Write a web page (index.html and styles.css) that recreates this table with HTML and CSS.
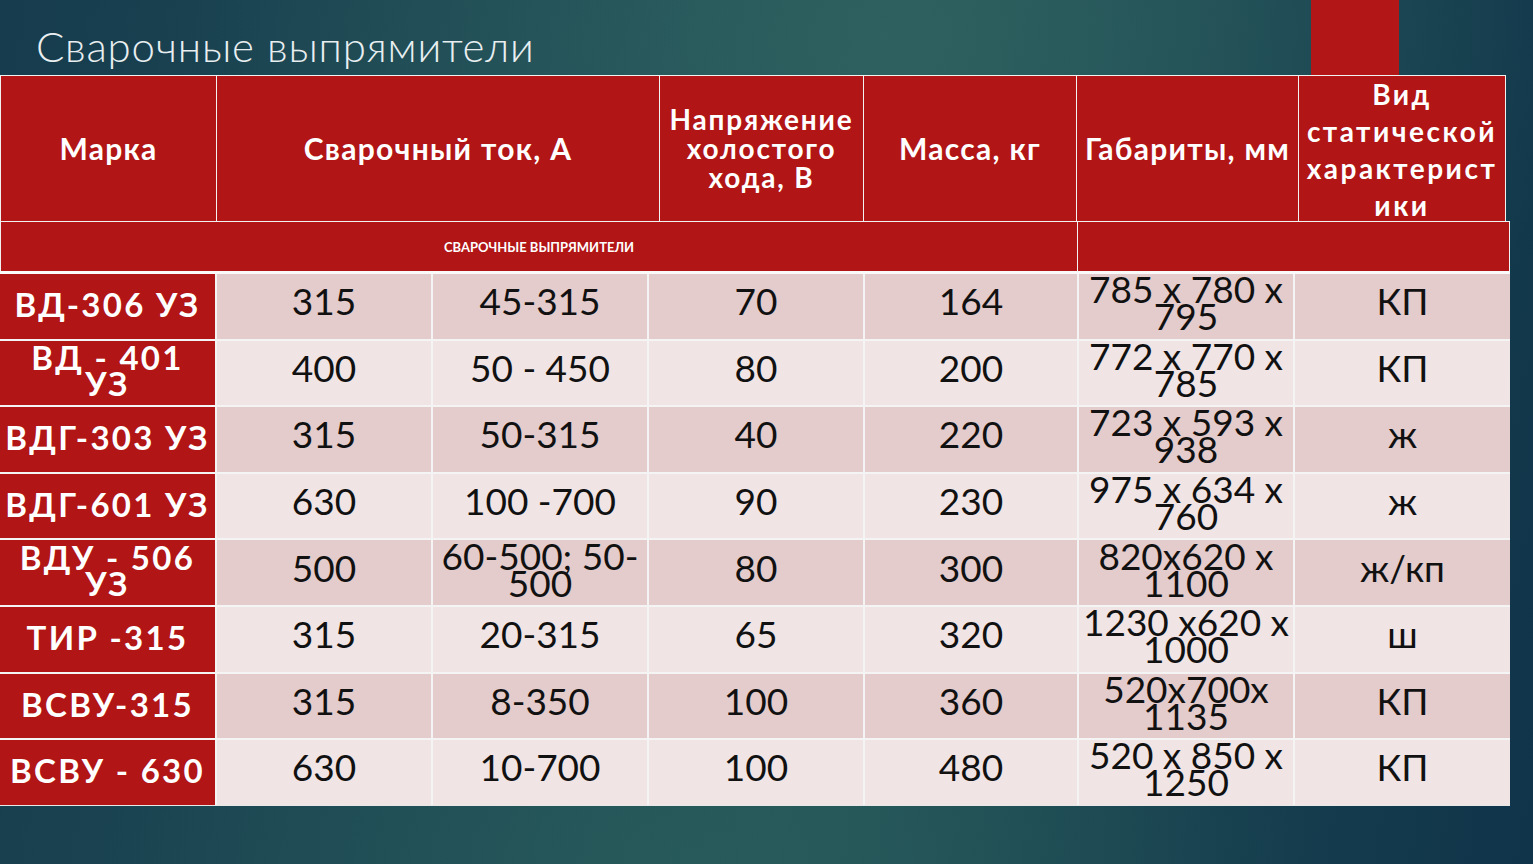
FILE: index.html
```html
<!DOCTYPE html>
<html lang="ru">
<head>
<meta charset="utf-8">
<title>Сварочные выпрямители</title>
<link rel="stylesheet" href="styles.css">
</head>
<body>
<div class="slide">
  <div class="top">
    <h1 class="title">Сварочные выпрямители</h1>
    <div class="accent"></div>
  </div>
  <div class="table">
    <div class="head1">
      <div class="hcell">Марка</div>
      <div class="hcell">Сварочный ток, А</div>
      <div class="hcell hsmall">Напряжение холостого хода, В</div>
      <div class="hcell">Масса, кг</div>
      <div class="hcell">Габариты, мм</div>
      <div class="hcell hvid">Вид статической характерист<wbr>ики</div>
    </div>
    <div class="head2">
      <div class="h2cell">СВАРОЧНЫЕ ВЫПРЯМИТЕЛИ</div>
      <div class="h2cell"></div>
    </div>
    <div class="body">
      <div class="cell mark odd">ВД-306 УЗ</div>
      <div class="cell odd">315</div>
      <div class="cell odd">45-315</div>
      <div class="cell odd">70</div>
      <div class="cell odd">164</div>
      <div class="cell odd two">785 x 780 x<br>795</div>
      <div class="cell odd">КП</div>

      <div class="cell mark two">ВД - 401<br>УЗ</div>
      <div class="cell even">400</div>
      <div class="cell even">50 - 450</div>
      <div class="cell even">80</div>
      <div class="cell even">200</div>
      <div class="cell even two">772 x 770 x<br>785</div>
      <div class="cell even">КП</div>

      <div class="cell mark">ВДГ-303 УЗ</div>
      <div class="cell odd">315</div>
      <div class="cell odd">50-315</div>
      <div class="cell odd">40</div>
      <div class="cell odd">220</div>
      <div class="cell odd two">723 x 593 x<br>938</div>
      <div class="cell odd">ж</div>

      <div class="cell mark">ВДГ-601 УЗ</div>
      <div class="cell even">630</div>
      <div class="cell even">100 -700</div>
      <div class="cell even">90</div>
      <div class="cell even">230</div>
      <div class="cell even two">975 x 634 x<br>760</div>
      <div class="cell even">ж</div>

      <div class="cell mark two">ВДУ - 506<br>УЗ</div>
      <div class="cell odd">500</div>
      <div class="cell odd two">60-500; 50-<br>500</div>
      <div class="cell odd">80</div>
      <div class="cell odd">300</div>
      <div class="cell odd two">820x620 x<br>1100</div>
      <div class="cell odd">ж/кп</div>

      <div class="cell mark">ТИР -315</div>
      <div class="cell even">315</div>
      <div class="cell even">20-315</div>
      <div class="cell even">65</div>
      <div class="cell even">320</div>
      <div class="cell even two">1230 x620 x<br>1000</div>
      <div class="cell even">ш</div>

      <div class="cell mark">ВСВУ-315</div>
      <div class="cell odd">315</div>
      <div class="cell odd">8-350</div>
      <div class="cell odd">100</div>
      <div class="cell odd">360</div>
      <div class="cell odd two">520x700x<br>1135</div>
      <div class="cell odd">КП</div>

      <div class="cell mark">ВСВУ - 630</div>
      <div class="cell even">630</div>
      <div class="cell even">10-700</div>
      <div class="cell even">100</div>
      <div class="cell even">480</div>
      <div class="cell even two">520 x 850 x<br>1250</div>
      <div class="cell even">КП</div>
    </div>
  </div>
</div>
</body>
</html>
```

FILE: styles.css
```css
html, body {
  margin: 0;
  padding: 0;
}
body {
  width: 1533px;
  height: 864px;
  overflow: hidden;
}
.slide {
  width: 1533px;
  height: 864px;
  background:
    radial-gradient(ellipse 700px 500px at 880px 40px, rgba(48, 100, 98, 0.75), rgba(48, 100, 98, 0) 100%),
    radial-gradient(ellipse 600px 300px at 700px 860px, rgba(40, 92, 92, 0.7), rgba(40, 92, 92, 0) 100%),
    linear-gradient(100deg, #163c4d 0%, #1f4b55 35%, #275758 55%, #17404f 80%, #10344a 100%);
  font-family: "Lato", "Liberation Sans", sans-serif;
}
.top {
  height: 75px;
  display: flex;
  align-items: stretch;
}
.title {
  margin: 0;
  padding: 22px 0 0 36px;
  font-family: "Lato", "Liberation Sans", sans-serif;
  font-weight: 300;
  font-size: 42px;
  line-height: 48px;
  color: #e9eff1;
  letter-spacing: 0.85px;
}
.accent {
  margin-left: auto;
  margin-right: 134px;
  width: 88px;
  background: #b21616;
}
.table {
  display: flex;
  flex-direction: column;
  align-items: flex-start;
}
.head1 {
  display: grid;
  grid-template-columns: 215px 442px 203px 212px 221px 206px;
  grid-template-rows: 145px;
  gap: 1px;
  background: #f2f2f2;
  border: 1px solid #f2f2f2;
  border-bottom: none;
}
.hcell {
  background: #b11515;
  color: #fff;
  font-weight: 700;
  font-size: 30px;
  line-height: 29px;
  letter-spacing: 1.3px;
  text-align: center;
  display: flex;
  align-items: center;
  justify-content: center;
}
.hsmall {
  font-size: 28px;
  letter-spacing: 1.8px;
  padding: 0 2px;
}
.hvid {
  font-size: 28px;
  line-height: 37px;
  letter-spacing: 2.5px;
  padding: 2px 0 0 0;
}
.head2 {
  display: grid;
  grid-template-columns: 1076px 431px;
  grid-template-rows: 49px;
  gap: 1px;
  background: #f2f2f2;
  border: 1px solid #f2f2f2;
  border-bottom: 3px solid #fafafa;
}
.h2cell {
  background: #b11515;
  color: #fff;
  font-weight: 700;
  font-size: 13px;
  display: flex;
  align-items: center;
  justify-content: center;
}
.body {
  display: grid;
  grid-template-columns: 215px 214px 214px 214px 212px 214px 215px;
  grid-template-rows: repeat(8, 64.6px);
  gap: 2px;
  background: #f4f4f4;
  border-bottom: 1px solid #e8e8e8;
}
.cell {
  display: flex;
  align-items: center;
  justify-content: center;
  text-align: center;
  font-size: 37px;
  line-height: 40px;
  color: #111;
  padding-bottom: 10px;
  box-sizing: border-box;
  white-space: nowrap;
}
.cell.two {
  line-height: 27px;
  padding-bottom: 8px;
}
.odd { background: #e4cbcc; }
.even { background: #f0e4e5; }
.cell.mark {
  background: #b11515;
  color: #fff;
  font-weight: 700;
  font-size: 33px;
  letter-spacing: 2.3px;
  padding-bottom: 4px;
}
.cell.mark.two {
  line-height: 26px;
  padding-bottom: 6px;
}
```
